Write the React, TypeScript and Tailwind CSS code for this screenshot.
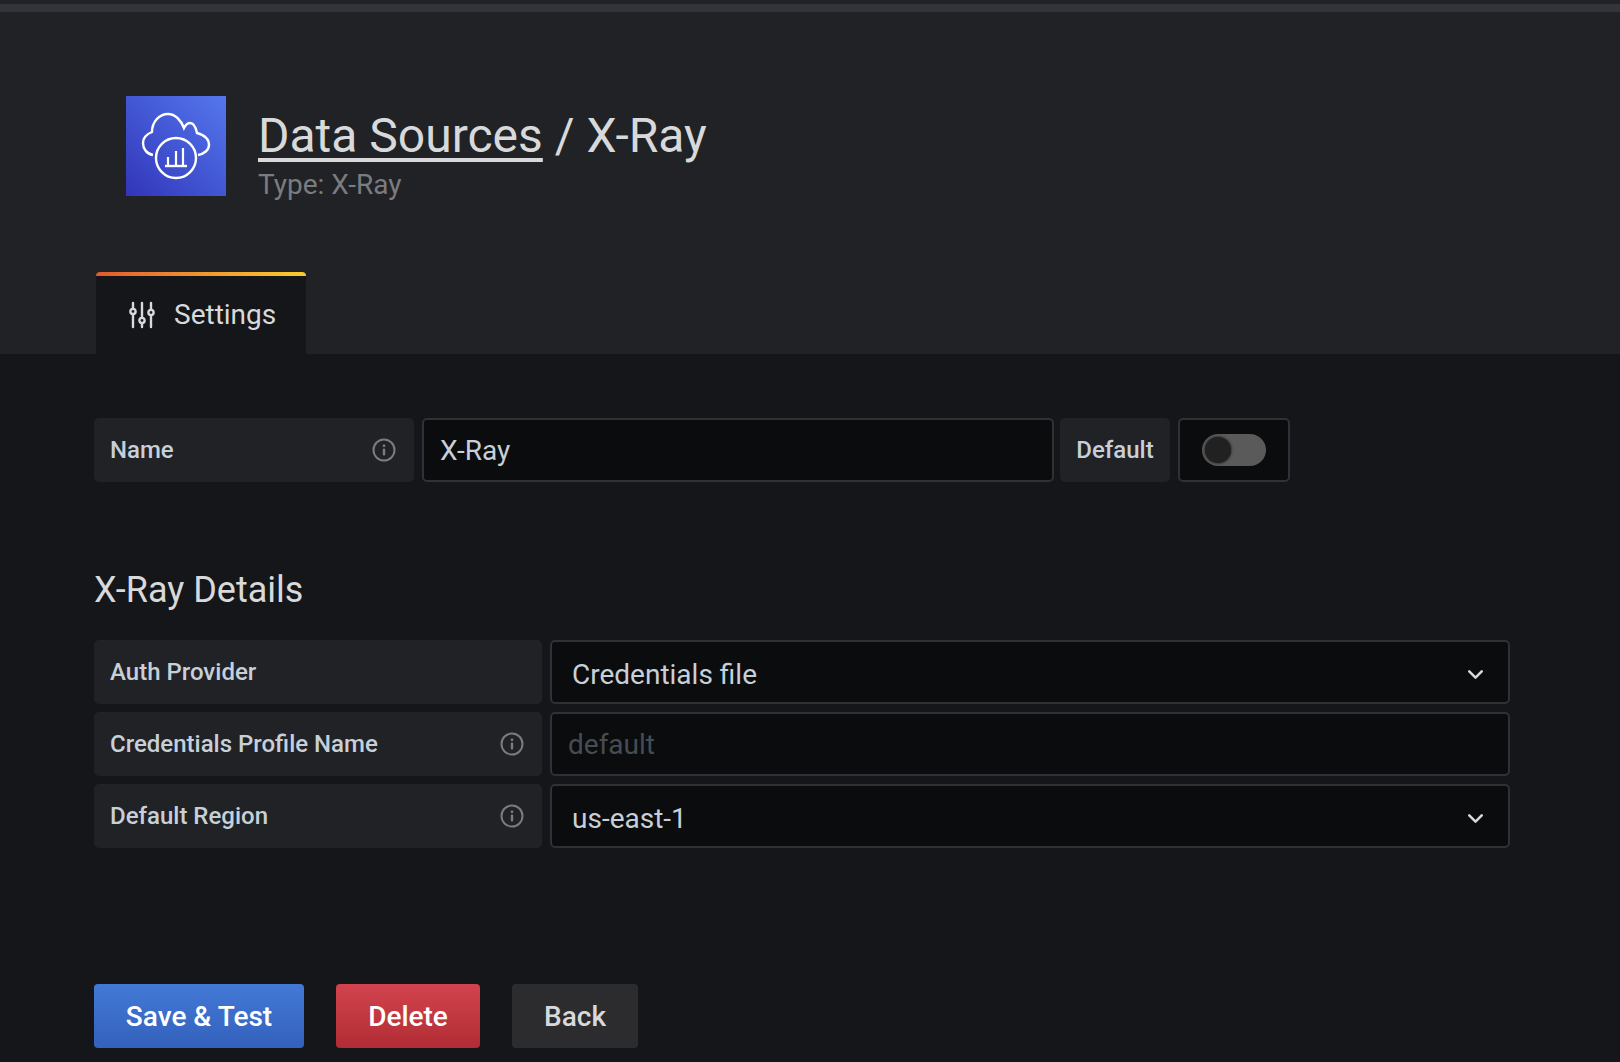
import React from 'react';
import { ChevronDown } from 'lucide-react';

const InfoIcon = () => (
  <svg width="24" height="24" viewBox="0 0 24 24" fill="none" className="shrink-0 text-[#7b7c80]">
    <circle cx="12" cy="12" r="10.5" stroke="currentColor" strokeWidth="2" />
    <circle cx="12" cy="7.8" r="1.4" fill="currentColor" />
    <rect x="10.8" y="10.5" width="2.4" height="7" rx="1" fill="currentColor" />
  </svg>
);

const Logo = () => (
  <div className="w-[100px] h-[100px] shrink-0 flex items-center justify-center bg-gradient-to-tr from-[#3334b9] to-[#5577ee]">
    <svg width="100" height="100" viewBox="0 0 100 100" fill="none" stroke="white" strokeWidth="2.4">
      <path d="M27 59 C21 58 17 53 17 47 C17 42 21 38 26 36 C26 26 33 18 42 18 C49 18 55 24 58 32 C60 28 62 27 64 27 C68 27 70 32 71 37 C78 39 83 43 83 49 C83 54 78 58 72 59" />
      <circle cx="50" cy="62" r="20" />
      <path d="M42 70 V61 M50 70 V55 M57 70 V52" strokeWidth="2.2" />
      <path d="M39 70 H61" strokeWidth="2.4" />
    </svg>
  </div>
);

const SettingsIcon = () => (
  <svg width="28" height="28" viewBox="0 0 28 28" fill="none" stroke="#d8d9da" strokeWidth="2.4" strokeLinecap="round">
    <path d="M5 2 V8 M5 13 V26 M14 2 V17 M14 22 V26 M23 2 V9 M23 14 V26" />
    <circle cx="5" cy="10.5" r="2.6" />
    <circle cx="14" cy="19.5" r="2.6" />
    <circle cx="23" cy="11.5" r="2.6" />
  </svg>
);

const FieldLabel: React.FC<{ label: string; info?: boolean; className: string }> = ({ label, info, className }) => (
  <div className={`h-[64px] shrink-0 flex items-center justify-between pl-4 pr-[18px] rounded-[5px] bg-[#212226] text-[24px] font-medium text-[#c7d0d9] ${className}`}>
    <span>{label}</span>
    {info && <InfoIcon />}
  </div>
);

const DetailRow: React.FC<{ label: string; info?: boolean; children: React.ReactNode }> = ({ label, info, children }) => (
  <div className="flex gap-2">
    <FieldLabel label={label} info={info} className="w-[448px]" />
    <div className="w-[960px] h-[64px] flex items-center justify-between pl-[20px] pr-[20px] rounded-[5px] border-2 border-[#2c3235] bg-[#0b0c0e] text-[28px] text-[#c7d0d9]">
      {children}
    </div>
  </div>
);

export default function App() {
  return (
    <div className="w-[1620px] h-[1062px] overflow-hidden bg-[#141619] font-['Roboto',sans-serif]">
      <header className="h-[354px] bg-[#212226] flex flex-col">
        <div className="h-[12px] border-b-[8px] border-[#34353a] shrink-0" />
        <div className="flex items-start pl-[126px] pt-[84px] gap-8">
          <Logo />
          <div className="flex flex-col">
            <h1 className="text-[48px] leading-[56px] mt-[12px] text-[#d8d9da]">
              <span className="underline decoration-[4px] underline-offset-[6px]">Data Sources</span> / X-Ray
            </h1>
            <p className="text-[28px] leading-[32px] mt-[5px] text-[#7b7c80]">Type: X-Ray</p>
          </div>
        </div>
        <div className="mt-auto ml-[96px] w-[210px] h-[82px] flex flex-col rounded-t-[4px] overflow-hidden bg-[#141619]">
          <div className="h-[4px] shrink-0 bg-gradient-to-r from-[#e0592f] to-[#f8cc2e]" />
          <div className="flex-1 flex items-center gap-[18px] pl-[32px] text-[28px] text-[#d8d9da]">
            <SettingsIcon />
            <span>Settings</span>
          </div>
        </div>
      </header>

      <main className="pl-[94px]">
        <div className="flex pt-[64px]">
          <FieldLabel label="Name" info className="w-[320px]" />
          <div className="ml-2 w-[632px] h-[64px] flex items-center pl-[16px] pt-[2px] rounded-[5px] border-2 border-[#2c3235] bg-[#0b0c0e] text-[28px] text-[#c7d0d9]">
            X-Ray
          </div>
          <div className="ml-[6px] w-[110px] h-[64px] flex items-center justify-center rounded-[5px] bg-[#212226] text-[24px] font-medium text-[#c7d0d9]">
            Default
          </div>
          <div className="ml-2 w-[112px] h-[64px] flex items-center justify-center rounded-[5px] border-2 border-[#2c3235] bg-[#0b0c0e]">
            <div className="w-[64px] h-[32px] rounded-full bg-[#5a5a5a] flex items-center pl-[3px]">
              <div className="w-[26px] h-[26px] rounded-full bg-[#212121] shadow-[0_0_3px_#111]" />
            </div>
          </div>
        </div>

        <h2 className="mt-[87px] text-[36px] leading-[42px] text-[#d8d9da]">X-Ray Details</h2>

        <div className="mt-[29px] flex flex-col gap-2">
          <DetailRow label="Auth Provider">
            <span className="pt-[6px]">Credentials file</span>
            <ChevronDown size={25} strokeWidth={2.4} className="mt-1 text-[#d8d9da]" />
          </DetailRow>
          <DetailRow label="Credentials Profile Name" info>
            <span className="pt-[2px] -ml-1 text-[#464c54]">default</span>
          </DetailRow>
          <DetailRow label="Default Region" info>
            <span className="pt-[6px]">us-east-1</span>
            <ChevronDown size={25} strokeWidth={2.4} className="mt-1 text-[#d8d9da]" />
          </DetailRow>
        </div>

        <div className="mt-[136px] flex gap-8 text-[28px] font-medium">
          <button className="w-[210px] h-[64px] pt-[2px] rounded-[4px] bg-gradient-to-b from-[#4379d6] to-[#3361bc] text-white">Save &amp; Test</button>
          <button className="w-[144px] h-[64px] pt-[2px] rounded-[4px] bg-gradient-to-b from-[#d2434e] to-[#b22c34] text-white">Delete</button>
          <button className="w-[126px] h-[64px] pt-[2px] rounded-[4px] bg-[#2c2c2e] text-[#d8d9da]">Back</button>
        </div>
      </main>
    </div>
  );
}
